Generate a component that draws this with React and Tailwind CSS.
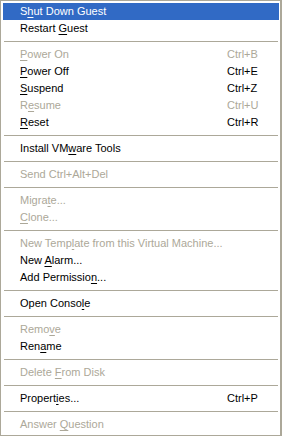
const items = [
  { label: "Shut Down Guest", key: "h", active: true },
  { label: "Restart Guest", key: "G" },
  { sep: true },
  { label: "Power On", key: "P", shortcut: "Ctrl+B", disabled: true },
  { label: "Power Off", key: "P", shortcut: "Ctrl+E" },
  { label: "Suspend", key: "S", shortcut: "Ctrl+Z" },
  { label: "Resume", key: "e", shortcut: "Ctrl+U", disabled: true },
  { label: "Reset", key: "R", shortcut: "Ctrl+R" },
  { sep: true },
  { label: "Install VMware Tools", key: "w" },
  { sep: true },
  { label: "Send Ctrl+Alt+Del", disabled: true },
  { sep: true },
  { label: "Migrate...", key: "t", disabled: true },
  { label: "Clone...", key: "C", disabled: true },
  { sep: true },
  { label: "New Template from this Virtual Machine...", key: "l", disabled: true },
  { label: "New Alarm...", key: "A" },
  { label: "Add Permission...", key: "n", at: 13 },
  { sep: true },
  { label: "Open Console", key: "l" },
  { sep: true },
  { label: "Remove", key: "v", disabled: true },
  { label: "Rename", key: "a" },
  { sep: true },
  { label: "Delete From Disk", key: "F", disabled: true },
  { sep: true },
  { label: "Properties...", key: "i", at: 7, shortcut: "Ctrl+P" },
  { sep: true },
  { label: "Answer Question", key: "Q", disabled: true },
];

// underline the mnemonic letter (first match, or at a given index)
function Label({ text, mnemonic, at }) {
  if (!mnemonic) return text;
  const i = at !== undefined ? at : text.indexOf(mnemonic);
  if (i < 0) return text;
  return (
    <>
      {text.slice(0, i)}
      <span className="underline underline-offset-[2px]">{text[i]}</span>
      {text.slice(i + 1)}
    </>
  );
}

export default function App() {
  return (
    <div
      className="w-[282px] h-[436px] bg-white border-l border-t border-b border-r-2 border-[#aca899] pt-[2px] pb-[2px] pl-[2px] pr-[1px] text-[11px] overflow-hidden"
      style={{ fontFamily: '"Liberation Sans", Arial, sans-serif' }}
    >
      {items.map((item, idx) =>
        item.sep ? (
          <div key={idx} className="h-[9px] flex items-center px-[1px]">
            <div className="h-px w-full bg-[#aca899]" />
          </div>
        ) : (
          <div
            key={idx}
            className={
              "h-[17px] leading-[17px] flex whitespace-nowrap " +
              (item.active
                ? "bg-[#316ac5] text-white"
                : item.disabled
                ? "text-[#aca899]"
                : "text-black")
            }
          >
            <div className="pl-[17px] w-[224px]">
              <Label text={item.label} mnemonic={item.key} at={item.at} />
            </div>
            {item.shortcut && <div>{item.shortcut}</div>}
          </div>
        )
      )}
    </div>
  );
}
